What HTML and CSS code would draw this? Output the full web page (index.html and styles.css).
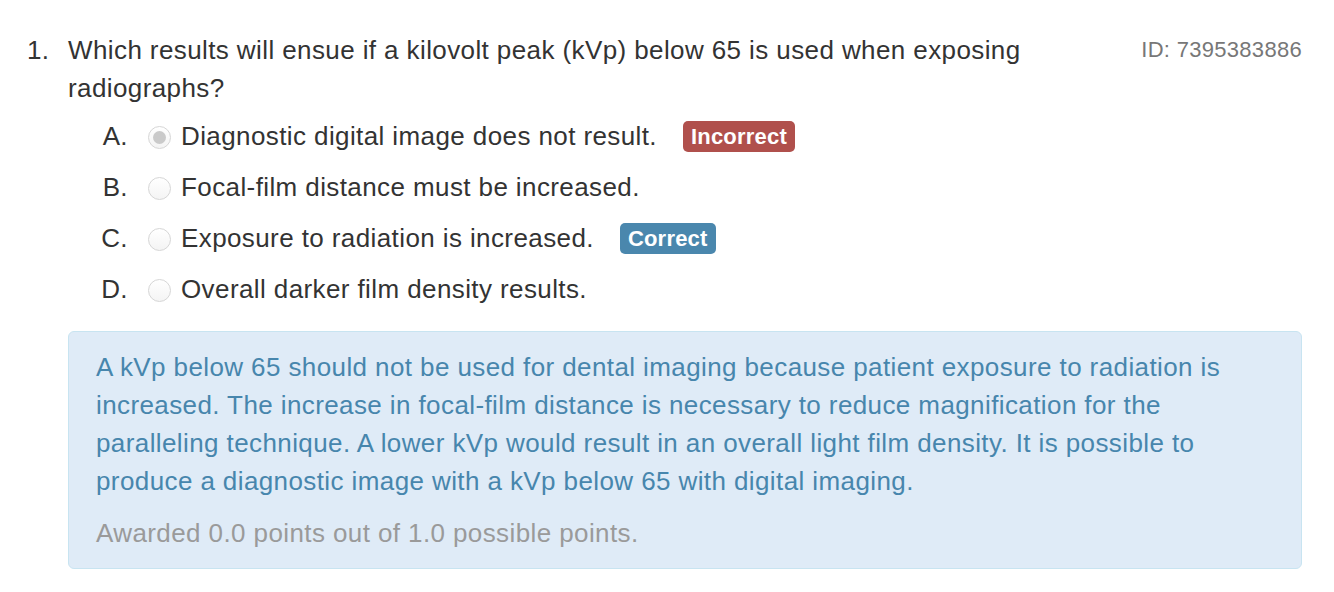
FILE: index.html
```html
<!DOCTYPE html>
<html>
<head>
<meta charset="utf-8">
<link rel="stylesheet" href="styles.css">
</head>
<body>
<div class="question">
  <div class="q-head">
    <span class="q-num">1.</span>
    <div class="q-text">Which results will ensue if a kilovolt peak (kVp) below 65 is used when exposing radiographs?</div>
    <span class="q-id">ID: 7395383886</span>
  </div>
  <ul class="options">
    <li class="option">
      <span class="opt-letter">A.</span>
      <span class="radio checked"></span>
      <span class="opt-text">Diagnostic digital image does not result.</span>
      <span class="badge badge-wrong">Incorrect</span>
    </li>
    <li class="option">
      <span class="opt-letter">B.</span>
      <span class="radio"></span>
      <span class="opt-text">Focal-film distance must be increased.</span>
    </li>
    <li class="option">
      <span class="opt-letter">C.</span>
      <span class="radio"></span>
      <span class="opt-text">Exposure to radiation is increased.</span>
      <span class="badge badge-right">Correct</span>
    </li>
    <li class="option">
      <span class="opt-letter">D.</span>
      <span class="radio"></span>
      <span class="opt-text">Overall darker film density results.</span>
    </li>
  </ul>
  <div class="feedback">
    <p class="explanation">A kVp below 65 should not be used for dental imaging because patient exposure to radiation is increased. The increase in focal-film distance is necessary to reduce magnification for the paralleling technique. A lower kVp would result in an overall light film density. It is possible to produce a diagnostic image with a kVp below 65 with digital imaging.</p>
    <p class="score">Awarded 0.0 points out of 1.0 possible points.</p>
  </div>
</div>
</body>
</html>
```
FILE: styles.css
```css
html, body {
  margin: 0;
  padding: 0;
  background: #ffffff;
}
body {
  font-family: "Liberation Sans", Arial, sans-serif;
  font-size: 26px;
  letter-spacing: 0.4px;
  line-height: 38px;
  color: #333333;
}
.question {
  padding: 31px 32px 0 27px;
}
.q-head {
  display: flex;
  align-items: flex-start;
}
.q-num {
  width: 41px;
  flex: none;
}
.q-text {
  flex: 1;
  padding-right: 100px;
}
.q-id {
  flex: none;
  color: #777777;
  font-size: 22px;
  letter-spacing: 0.3px;
}
.options {
  list-style: none;
  margin: 10px 0 0 41px;
  padding: 0;
  display: flex;
  flex-direction: column;
  gap: 13px;
}
.option {
  display: flex;
  align-items: center;
  height: 38px;
}
.opt-letter {
  width: 60px;
  text-align: right;
  flex: none;
}
.radio {
  width: 23px;
  height: 23px;
  margin: 2px 10px 0 20px;
  border-radius: 50%;
  border: 1px solid #d6d6d6;
  background: linear-gradient(#ffffff, #f4f4f4);
  box-sizing: border-box;
  display: flex;
  align-items: center;
  justify-content: center;
  flex: none;
}
.radio.checked::after {
  content: "";
  width: 13px;
  height: 13px;
  border-radius: 50%;
  background: #cacaca;
}
.badge {
  margin-left: 26px;
  padding: 0 8px;
  height: 31px;
  line-height: 31px;
  border-radius: 5px;
  color: #ffffff;
  font-weight: bold;
  font-size: 22px;
  letter-spacing: 0.2px;
}
.badge-wrong {
  background: #b0504c;
}
.badge-right {
  background: #4a87ad;
}
.feedback {
  margin: 23px 0 0 41px;
  padding: 16px 27px 16px 27px;
  background: #dfebf7;
  border: 1px solid #c8e4f1;
  border-radius: 6px;
}
.explanation {
  margin: 0;
  color: #4786ad;
}
.score {
  margin: 14px 0 0 0;
  color: #9a9a9a;
}
```
